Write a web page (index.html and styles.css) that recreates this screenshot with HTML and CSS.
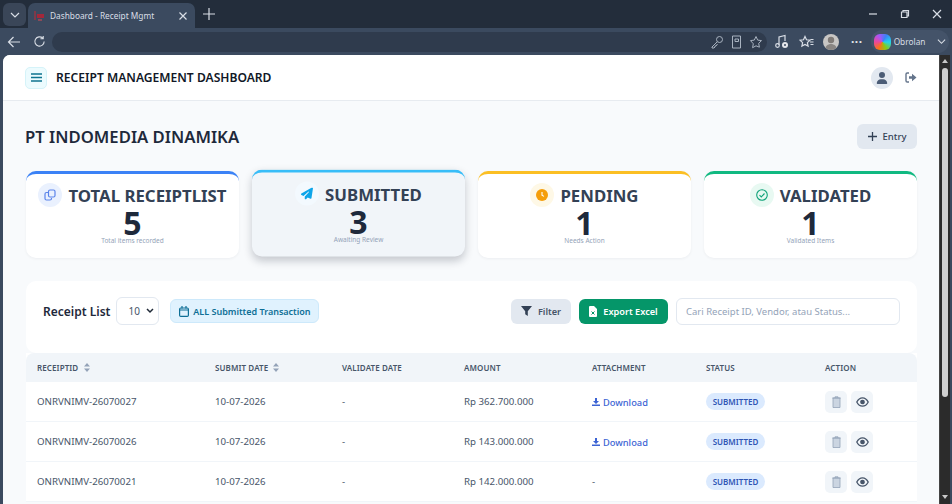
FILE: index.html
```html
<!DOCTYPE html>
<html lang="id">
<head>
<meta charset="utf-8">
<title>Dashboard - Receipt Mgmt</title>
<link rel="stylesheet" href="styles.css">
</head>
<body>
<div class="tabbar">
  <div class="tab-menu"><svg width="12" height="12" viewBox="0 0 12 12"><path d="M2 4l4 4 4-4" class="st"/></svg></div>
  <div class="tab">
    <svg class="favicon" width="12" height="12" viewBox="0 0 12 12"><path d="M1 1h2v9H1z" fill="#7d3a4a"/><path d="M4 4h7v4H4z" fill="#a3283a"/><path d="M5 9h4v2H5z" fill="#8a4a58"/></svg>
    <span class="tab-title">Dashboard - Receipt Mgmt</span>
    <svg class="tab-close" width="10" height="10" viewBox="0 0 10 10"><path d="M1.500 1.500l7 7M8.500 1.500l-7 7" class="st"/></svg>
  </div>
  <svg class="tab-new" width="12" height="12" viewBox="0 0 12 12"><path d="M6 0v12M0 6h12" class="st"/></svg>
  <div class="win-controls">
    <svg width="10" height="10" viewBox="0 0 10 10"><path d="M1 5h8" class="st"/></svg>
    <svg width="10" height="10" viewBox="0 0 10 10"><path d="M1.500 3h5.500v5.500H1.500zM3 3V1.500h5.500V7H7" class="st"/></svg>
    <svg width="10" height="10" viewBox="0 0 10 10"><path d="M1 1l8 8M9 1l-8 8" class="st"/></svg>
  </div>
</div>
<div class="toolbar">
  <svg class="nav-ic" width="14" height="14" viewBox="0 0 14 14"><path d="M13 7H1.500M6.500 2l-5 5 5 5" class="st"/></svg>
  <svg class="nav-ic nav-reload" width="13" height="13" viewBox="0 0 14 14"><path d="M12 7a5 5 0 1 1-1.500-3.600M11 1v3H8" class="st"/></svg>
  <div class="address">
    <svg width="14" height="14" viewBox="0 0 14 14"><circle cx="9.500" cy="4.500" r="3" class="st-dim"/><path d="M7.300 6.700L2 12v1h2l1-1v-1h1l1.500-2" class="st-dim"/></svg>
    <svg width="13" height="14" viewBox="0 0 13 14"><path d="M2.500 1h8v12h-8zM5 4h3.500v2.500H5z" class="st-dim"/></svg>
    <svg width="14" height="14" viewBox="0 0 14 14"><path d="M7 1.500l1.700 3.600 3.800.5-2.800 2.700.7 3.900L7 10.800l-3.400 1.900.7-3.900L1.500 5.600l3.800-.5z" class="st-dim"/></svg>
  </div>
  <svg class="tool-ic tool-music" width="15" height="15" viewBox="0 0 15 15"><path d="M5 11V3l6-1.500V7" class="st"/><circle cx="3.500" cy="11.500" r="1.800" class="st"/><circle cx="11" cy="11" r="3" fill="#e5e7eb"/><circle cx="11" cy="11" r="1" fill="#3b4a5f"/></svg>
  <svg class="tool-ic" width="15" height="14" viewBox="0 0 15 14"><path d="M6 1.500l1.500 3.300 3.500.4-2.600 2.400.7 3.500L6 9.400l-3.100 1.700.7-3.500L1 5.200l3.500-.4zM11 7h3.500M11.500 9.500h3M11.500 4.500h3" class="st"/></svg>
  <div class="profile"><svg width="16" height="16" viewBox="0 0 16 16"><circle cx="8" cy="6" r="3.200" fill="#7f7a76"/><path d="M2 16c0-4 3-6 6-6s6 2 6 6z" fill="#8a8683"/></svg></div>
  <span class="dots">&middot;&middot;&middot;</span>
  <div class="copilot">
    <span class="copilot-logo"></span>
    <span class="copilot-text">Obrolan</span>
    <svg class="chev" width="9" height="9" viewBox="0 0 10 10"><path d="M1 3l4 4 4-4" class="st"/></svg>
  </div>
</div>
<div class="viewport">
  <div class="page">
    <header class="topbar">
      <div class="top-left">
        <button class="burger"><svg width="11" height="9" viewBox="0 0 11 9"><path d="M0 1h11M0 4.500h11M0 8h11" stroke="#0e7490" stroke-width="1.400"/></svg></button>
        <h1 class="app-title">RECEIPT MANAGEMENT DASHBOARD</h1>
      </div>
      <div class="top-right">
        <span class="avatar"><svg width="12" height="12" viewBox="0 0 448 512"><path fill="#4b5c76" d="M224 256a128 128 0 1 0 0-256 128 128 0 0 0 0 256zm-45.700 48C79.800 304 0 383.800 0 482.300 0 498.700 13.300 512 29.700 512h388.600c16.400 0 29.700-13.300 29.700-29.700C448 383.800 368.200 304 269.700 304z"/></svg></span>
        <svg class="logout" width="12" height="11" viewBox="0 0 12 11"><path d="M4 1H2.200A1.200 1.200 0 0 0 1 2.200v6.600A1.200 1.200 0 0 0 2.200 10H4" fill="none" stroke="#64748b" stroke-width="1.400"/><path d="M4 4.200h3V1.800l4.500 3.700L7 9.200V6.800H4z" fill="#64748b"/></svg>
      </div>
    </header>
    <main class="content">
      <div class="title-row">
        <h2 class="company">PT INDOMEDIA DINAMIKA</h2>
        <button class="entry-btn"><svg width="9" height="9" viewBox="0 0 9 9"><path d="M4.500 0v9M0 4.500h9" stroke="#334155" stroke-width="1.300"/></svg>Entry</button>
      </div>
      <section class="stats">
        <article class="stat stat-blue">
          <div class="stat-head"><span class="stat-ic ic-blue"><svg width="12" height="12" viewBox="0 0 12 12" fill="none" stroke="#5b84ea" stroke-width="1.200"><rect x="4.500" y="1" width="6.500" height="7" rx="1.500"/><path d="M4 3.500H2.500A1.500 1.500 0 0 0 1 5v4.500A1.500 1.500 0 0 0 2.500 11H6a1.500 1.500 0 0 0 1.500-1.500V9"/></svg></span><span class="stat-label">TOTAL RECEIPTLIST</span></div>
          <div class="stat-num">5</div>
          <div class="stat-sub">Total items recorded</div>
        </article>
        <article class="stat stat-sky raised">
          <div class="stat-head"><span class="stat-ic ic-sky"><svg width="12" height="12" viewBox="0 0 512 512"><path fill="#0ea5e9" d="M498.100 5.600c10.100 7 15.400 19.100 13.500 31.200l-64 416c-1.500 9.700-7.400 18.200-16 23s-18.900 5.400-28 1.600L284 427.700l-68.500 74.100c-8.900 9.700-22.900 12.900-35.200 8.100S160 493.200 160 480v-83.600c0-4 1.500-7.800 4.200-10.800l167.600-182.900c5.800-6.300 5.600-16-.4-22s-15.700-6.400-22-.7L106 360.800 17.700 316.600C7.100 311.300.3 300.700 0 288.900s5.900-22.800 16.100-28.700l448-256c10.700-6.100 23.900-5.500 34 1.400z"/></svg></span><span class="stat-label">SUBMITTED</span></div>
          <div class="stat-num">3</div>
          <div class="stat-sub">Awaiting Review</div>
        </article>
        <article class="stat stat-amber">
          <div class="stat-head"><span class="stat-ic ic-amber"><svg width="12" height="12" viewBox="0 0 12 12"><circle cx="6" cy="6" r="6" fill="#f59e0b"/><path d="M6 3v3.200l2 1.200" fill="none" stroke="#fff" stroke-width="1.100"/></svg></span><span class="stat-label">PENDING</span></div>
          <div class="stat-num">1</div>
          <div class="stat-sub">Needs Action</div>
        </article>
        <article class="stat stat-green">
          <div class="stat-head"><span class="stat-ic ic-green"><svg width="12" height="12" viewBox="0 0 12 12" fill="none" stroke="#10a37a" stroke-width="1.100"><circle cx="6" cy="6" r="5.300"/><path d="M3.500 6.200l1.800 1.700 3.200-3.400"/></svg></span><span class="stat-label">VALIDATED</span></div>
          <div class="stat-num">1</div>
          <div class="stat-sub">Validated Items</div>
        </article>
      </section>
      <section class="list-card">
        <div class="list-tools">
          <div class="tools-left">
            <h3 class="list-title">Receipt List</h3>
            <div class="select">10<svg width="8" height="6" viewBox="0 0 8 6"><path d="M1 1l3 3 3-3" fill="none" stroke="#1f2937" stroke-width="1.500"/></svg></div>
            <span class="period"><svg width="10" height="11" viewBox="0 0 10 11" fill="none" stroke="#0e6f96" stroke-width="1.200"><rect x=".6" y="2" width="8.800" height="8.400" rx="1.200"/><path d="M.6 4h8.800M3 0v2.500M7 0v2.500"/></svg>ALL Submitted Transaction</span>
          </div>
          <div class="tools-right">
            <button class="btn btn-filter"><svg width="11" height="10" viewBox="0 0 11 10"><path d="M0 0h11L6.800 5.200V10L4.200 8.200v-3z" fill="#334155"/></svg>Filter</button>
            <button class="btn btn-export"><svg width="8" height="11" viewBox="0 0 8 11"><path d="M0 1a1 1 0 0 1 1-1h4l3 3v7a1 1 0 0 1-1 1H1a1 1 0 0 1-1-1z" fill="#fff"/><path d="M2.500 5.500l3 3M5.500 5.500l-3 3" stroke="#059669"/></svg>Export Excel</button>
            <div class="search">Cari Receipt ID, Vendor, atau Status...</div>
          </div>
        </div>
      </section>
      <table class="receipts">
        <colgroup><col class="c1"><col class="c2"><col class="c3"><col class="c4"><col class="c5"><col class="c6"><col class="c7"></colgroup>
        <thead>
          <tr>
            <th>RECEIPTID <svg class="sort" width="6" height="9" viewBox="0 0 6 9"><path d="M3 0l3 3.500H0zM3 9L0 5.500h6z" fill="#94a3b8"/></svg></th>
            <th>SUBMIT DATE <svg class="sort" width="6" height="9" viewBox="0 0 6 9"><path d="M3 0l3 3.500H0zM3 9L0 5.500h6z" fill="#94a3b8"/></svg></th>
            <th>VALIDATE DATE</th><th>AMOUNT</th><th>ATTACHMENT</th><th>STATUS</th><th>ACTION</th>
          </tr>
        </thead>
        <tbody>
          <tr>
            <td>ONRVNIMV-26070027</td><td>10-07-2026</td><td>-</td><td>Rp 362.700.000</td>
            <td><a class="dl"><svg width="8" height="8" viewBox="0 0 8 8"><path d="M3 0h2v3h2L4 6 1 3h2zM0 6.500h8V8H0z" fill="#3b63d4"/></svg>Download</a></td>
            <td><span class="badge">SUBMITTED</span></td>
            <td><div class="actions"><span class="act"><svg width="9" height="12" viewBox="0 0 9 12" fill="#cbd5e1" stroke="#94a3b8" stroke-width=".8"><path d="M1 2h7v9.500H1zM3 2V.8h3V2M.2 2h8.600"/></svg></span><span class="act"><svg width="13" height="10" viewBox="0 0 13 10" fill="none" stroke="#475569" stroke-width="1.300"><path d="M.8 5C2.300 2 4.300.8 6.500.8S10.700 2 12.200 5c-1.500 3-3.500 4.200-5.700 4.200S2.300 8 .8 5z"/><circle cx="6.500" cy="5" r="1.700" fill="#475569"/></svg></span></div></td>
          </tr>
          <tr>
            <td>ONRVNIMV-26070026</td><td>10-07-2026</td><td>-</td><td>Rp 143.000.000</td>
            <td><a class="dl"><svg width="8" height="8" viewBox="0 0 8 8"><path d="M3 0h2v3h2L4 6 1 3h2zM0 6.500h8V8H0z" fill="#3b63d4"/></svg>Download</a></td>
            <td><span class="badge">SUBMITTED</span></td>
            <td><div class="actions"><span class="act"><svg width="9" height="12" viewBox="0 0 9 12" fill="#cbd5e1" stroke="#94a3b8" stroke-width=".8"><path d="M1 2h7v9.500H1zM3 2V.8h3V2M.2 2h8.600"/></svg></span><span class="act"><svg width="13" height="10" viewBox="0 0 13 10" fill="none" stroke="#475569" stroke-width="1.300"><path d="M.8 5C2.300 2 4.300.8 6.500.8S10.700 2 12.200 5c-1.500 3-3.500 4.200-5.700 4.200S2.300 8 .8 5z"/><circle cx="6.500" cy="5" r="1.700" fill="#475569"/></svg></span></div></td>
          </tr>
          <tr>
            <td>ONRVNIMV-26070021</td><td>10-07-2026</td><td>-</td><td>Rp 142.000.000</td>
            <td>-</td>
            <td><span class="badge">SUBMITTED</span></td>
            <td><div class="actions"><span class="act"><svg width="9" height="12" viewBox="0 0 9 12" fill="#cbd5e1" stroke="#94a3b8" stroke-width=".8"><path d="M1 2h7v9.500H1zM3 2V.8h3V2M.2 2h8.600"/></svg></span><span class="act"><svg width="13" height="10" viewBox="0 0 13 10" fill="none" stroke="#475569" stroke-width="1.300"><path d="M.8 5C2.300 2 4.300.8 6.500.8S10.700 2 12.200 5c-1.500 3-3.500 4.200-5.700 4.200S2.300 8 .8 5z"/><circle cx="6.500" cy="5" r="1.700" fill="#475569"/></svg></span></div></td>
          </tr>
        </tbody>
      </table>
    </main>
  </div>
  <div class="scrollbar">
    <span class="sb-arrow"></span>
    <span class="sb-thumb"></span>
    <span class="sb-spacer"></span>
    <span class="sb-arrow sb-down"></span>
  </div>
</div>
</body>
</html>
```

FILE: styles.css
```css
* { box-sizing: border-box; }
html, body { margin: 0; height: 100%; overflow: hidden; }
body { width: 952px; height: 504px; display: flex; flex-direction: column; background: #3b4a5f; font-family: "Noto Sans", "Open Sans", sans-serif; color: #1e293b; }
button { font-family: inherit; border: 0; }
h1, h2, h3 { margin: 0; }
svg { display: block; flex: none; }
.st { fill: none; stroke: #d9dee6; stroke-width: 1.200; }
.st-dim { fill: none; stroke: #a9b3c0; stroke-width: 1; }

.tabbar { height: 28px; flex: none; background: #232d3b; display: flex; align-items: flex-end; padding-left: 3px; }
.tab-menu { width: 23px; height: 23px; margin-bottom: 2px; border-radius: 6px; background: #3a4658; display: flex; align-items: center; justify-content: center; }
.tab { width: 167px; height: 25px; margin-left: 2px; background: #3b4a5f; border-radius: 7px 7px 0 0; display: flex; align-items: center; padding: 0 6px 0 5px; color: #d9dee6; font-size: 8.300px; }
.favicon { margin-right: 5px; }
.tab-title { flex: 1; white-space: nowrap; }
.tab-close { margin-right: 1px; }
.tab-new { margin: 0 0 8px 8px; }
.win-controls { margin-left: auto; display: flex; gap: 22px; padding: 0 10px 9px 0; align-items: center; }

.toolbar { height: 27px; flex: none; background: #3b4a5f; display: flex; align-items: center; padding-left: 7px; }
.nav-ic { margin-right: 12px; }
.nav-reload { margin-right: 6px; }
.address { width: 715px; flex: none; height: 20px; border-radius: 10px; background: #2f3b4d; display: flex; justify-content: flex-end; align-items: center; gap: 6px; padding-right: 4px; }
.tool-ic { margin-left: 10px; }
.tool-music { margin-left: 7px; }
.profile { width: 16px; height: 16px; margin-left: 9px; border-radius: 50%; background: #c8c6c4; overflow: hidden; }
.dots { margin-left: 12px; color: #e5e7eb; font-size: 12px; font-weight: 700; letter-spacing: .5px; line-height: 1; }
.copilot { margin-left: 8px; flex: none; width: 78px; height: 23px; border-radius: 12px; background: #445369; display: flex; align-items: center; padding: 0 3px 0 3px; }
.copilot-logo { width: 17px; height: 16px; border-radius: 6px; background: conic-gradient(from 210deg, #f97316, #ec4899, #a855f7, #3b82f6, #22d3ee, #84cc16, #f97316); }
.copilot-text { color: #d9dee6; font-size: 8.300px; margin-left: 3px; }
.chev { margin-left: auto; }

.viewport { flex: 1; min-height: 0; display: flex; padding: 0 2px 0 3px; }
.page { width: 936px; background: #f8fafc; border-radius: 7px 0 0 0; overflow: hidden; }
.topbar { height: 46px; background: #fff; border-bottom: 1px solid #e7ebf0; display: flex; align-items: center; justify-content: space-between; padding: 0 22px; }
.top-left { display: flex; align-items: center; gap: 9px; }
.burger { width: 22px; height: 22px; padding: 0; border-radius: 5px; background: #ecfbfe; border: 1px solid #d5f3f9; display: flex; align-items: center; justify-content: center; }
.app-title { font-size: 12.100px; font-weight: 600; color: #111827; white-space: nowrap; }
.top-right { display: flex; align-items: center; gap: 12px; }
.avatar { width: 22px; height: 22px; border-radius: 50%; background: #e2e8f0; display: flex; align-items: center; justify-content: center; }

.content { padding: 23px 22px 0 23px; }
.title-row { display: flex; align-items: center; justify-content: space-between; height: 25px; }
.company { font-size: 16.700px; font-weight: 600; color: #1e293b; white-space: nowrap; margin-left: -1px; }
.entry-btn { height: 25px; width: 60px; border-radius: 6px; background: #e2e8f0; color: #334155; font-size: 9.500px; font-weight: 500; display: flex; align-items: center; justify-content: center; gap: 6px; }

.stats { margin-top: 22px; display: grid; grid-template-columns: repeat(4, 1fr); gap: 13px; }
.stat { height: 87px; background: #fff; border-radius: 10px; border-top: 3px solid; box-shadow: 0 1px 3px rgba(15, 23, 42, .05); display: flex; flex-direction: column; align-items: center; padding-top: 9px; }
.stat-blue { border-top-color: #3b82f6; }
.stat-sky { border-top-color: #38bdf8; }
.stat-amber { border-top-color: #fbbf24; }
.stat-green { border-top-color: #10b981; }
.raised { background: #f1f5f9; transform: translateY(-1.500px); box-shadow: 0 4px 8px rgba(15, 23, 42, .22); }
.stat-head { display: flex; align-items: center; gap: 6px; height: 24px; }
.stat-ic { width: 24px; height: 24px; border-radius: 50%; display: flex; align-items: center; justify-content: center; }
.ic-blue { background: #eaf1fe; }
.ic-sky { background: #f3f9fe; }
.ic-amber { background: #fef8e6; }
.ic-green { background: #e8f9f2; }
.stat-label { font-size: 16.800px; font-weight: 700; color: #334155; white-space: nowrap; line-height: 24px; margin-top: 2px; }
.stat-num { font-size: 32px; font-weight: 700; color: #1e293b; line-height: 26px; margin-top: 3px; }
.stat-sub { font-size: 6.500px; color: #94a3b8; line-height: 8px; margin-top: 1px; }

.list-card { margin-top: 23px; height: 72px; background: #fff; border-radius: 10px; padding: 17px 17px 0; }
.list-tools { display: flex; justify-content: space-between; height: 26px; align-items: center; }
.tools-left, .tools-right { display: flex; align-items: center; }
.list-title { font-size: 12px; font-weight: 600; color: #1e293b; margin-right: 6px; white-space: nowrap; }
.select { width: 43px; height: 28px; border: 1px solid #e2e8f0; border-radius: 6px; background: #fff; font-size: 10px; color: #475569; display: flex; align-items: center; justify-content: space-between; padding: 0 4px 0 11px; }
.period { margin-left: 11px; height: 24px; width: 149px; background: #e0f2fe; border: 1px solid #cde9fb; border-radius: 6px; color: #0e6f96; font-size: 9px; font-weight: 600; display: flex; align-items: center; justify-content: center; gap: 4px; white-space: nowrap; }
.btn { height: 25px; border-radius: 6px; font-size: 9.200px; font-weight: 600; display: flex; align-items: center; justify-content: center; gap: 6px; white-space: nowrap; }
.btn-filter { width: 60px; background: #e2e8f0; color: #475569; }
.btn-export { width: 89px; margin-left: 8px; background: #059669; color: #fff; }
.search { width: 224px; height: 27px; margin-left: 8px; background: #fff; border: 1px solid #e2e8f0; border-radius: 6px; font-size: 9.500px; color: #94a3b8; display: flex; align-items: center; padding-left: 9px; white-space: nowrap; }

.receipts { width: 891px; border-collapse: separate; border-spacing: 0; table-layout: fixed; background: #fff; font-size: 9.700px; color: #475569; }
.c1 { width: 178px; } .c2 { width: 127px; } .c3 { width: 122px; } .c4 { width: 128px; } .c5 { width: 114px; } .c6 { width: 119px; } .c7 { width: 103px; }
.receipts th { height: 29px; background: #f1f5f9; text-align: left; font-size: 8px; font-weight: 600; color: #475569; padding: 0 0 0 11px; white-space: nowrap; letter-spacing: .1px; }
.receipts th:first-child { border-radius: 8px 0 0 0; }
.receipts th:last-child { border-radius: 0 8px 0 0; }
.sort { display: inline-block; margin-left: 3px; vertical-align: -1px; }
.receipts td { height: 40px; padding: 0 0 0 11px; border-bottom: 1px solid #f1f5f9; white-space: nowrap; }
.dl { display: inline-flex; align-items: center; gap: 3px; color: #3b63d4; font-weight: 500; font-size: 9.300px; margin-top: 2px; }
.badge { display: inline-flex; height: 17px; width: 59px; align-items: center; justify-content: center; border-radius: 9px; background: #dbeafe; color: #2f55b5; font-size: 8px; font-weight: 600; }
.actions { display: flex; gap: 4px; }
.act { width: 22px; height: 22px; border-radius: 5px; background: #f1f5f9; display: flex; align-items: center; justify-content: center; }

.scrollbar { width: 11px; background: #2b2b2b; border-left: 1px solid #444; display: flex; flex-direction: column; align-items: center; }
.sb-arrow { width: 0; height: 0; margin: 4px 0 3px; border-left: 3px solid transparent; border-right: 3px solid transparent; border-bottom: 4px solid #c8c8c8; }
.sb-down { border-bottom: 0; border-top: 4px solid #c8c8c8; margin: 3px 0 5px; }
.sb-thumb { width: 6px; height: 329px; border-radius: 3px; background: #cfcfcf; margin-top: 2px; }
.sb-spacer { flex: 1; }
```
